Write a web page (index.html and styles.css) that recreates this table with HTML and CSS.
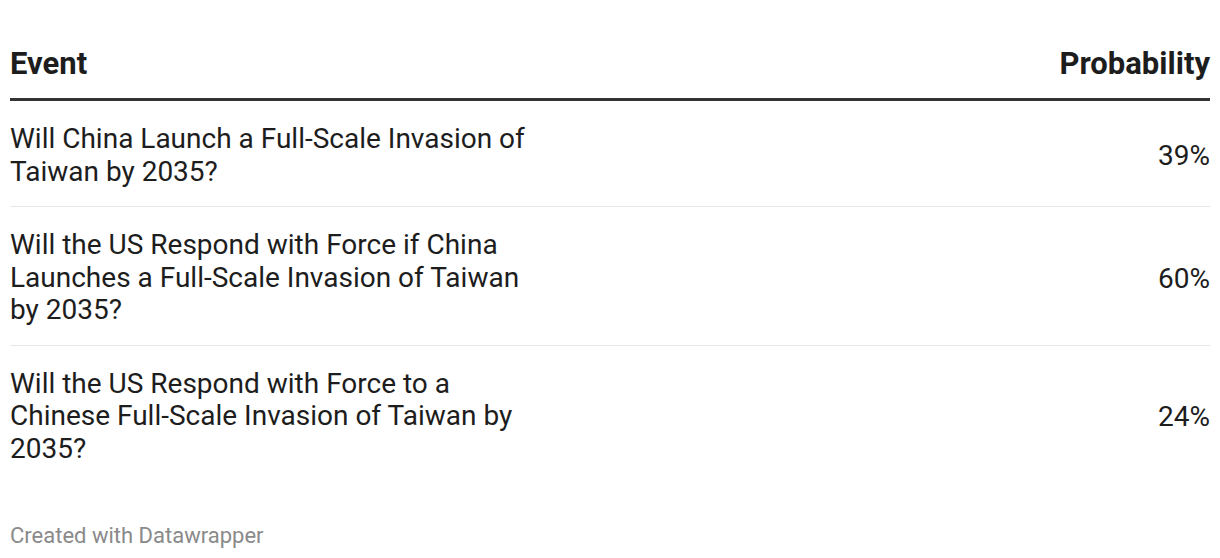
FILE: index.html
```html
<!DOCTYPE html>
<html>
<head>
<meta charset="utf-8">
<link rel="stylesheet" href="styles.css">
</head>
<body>
<div class="chart">
  <div class="table">
    <div class="row head">
      <div class="cell event">Event</div>
      <div class="cell prob">Probability</div>
    </div>
    <div class="row">
      <div class="cell event">Will China Launch a Full-Scale Invasion of Taiwan by 2035?</div>
      <div class="cell prob">39%</div>
    </div>
    <div class="row">
      <div class="cell event">Will the US Respond with Force if China Launches a Full-Scale Invasion of Taiwan by 2035?</div>
      <div class="cell prob">60%</div>
    </div>
    <div class="row last">
      <div class="cell event">Will the US Respond with Force to a Chinese Full-Scale Invasion of Taiwan by 2035?</div>
      <div class="cell prob">24%</div>
    </div>
  </div>
  <div class="footer">Created with Datawrapper</div>
</div>
</body>
</html>
```
FILE: styles.css
```css
html, body {
  margin: 0;
  padding: 0;
  background: #ffffff;
}
body {
  font-family: Roboto, "Liberation Sans", sans-serif;
  color: #1d1d1d;
}
.chart {
  padding: 0 10px;
}
.table {
  display: flex;
  flex-direction: column;
}
.row {
  display: flex;
  align-items: center;
  justify-content: space-between;
  border-bottom: 1px solid #e6e6e6;
  padding: 22px 0 18px;
  font-size: 28px;
  line-height: 32.5px;
}
.row .cell.prob {
  padding-top: 2px;
}
.row.head {
  font-weight: 700;
  font-size: 31px;
  line-height: 36px;
  padding: 46px 0 16px;
  border-bottom: 3px solid #333333;
  align-items: flex-end;
}
.row.head .cell.prob {
  padding-top: 0;
}
.row.last {
  border-bottom: none;
}
.cell.event {
  width: 526px;
}
.cell.prob {
  text-align: right;
}
.footer {
  margin-top: 40px;
  font-size: 22px;
  line-height: 26px;
  color: #8a8a8a;
}
```
